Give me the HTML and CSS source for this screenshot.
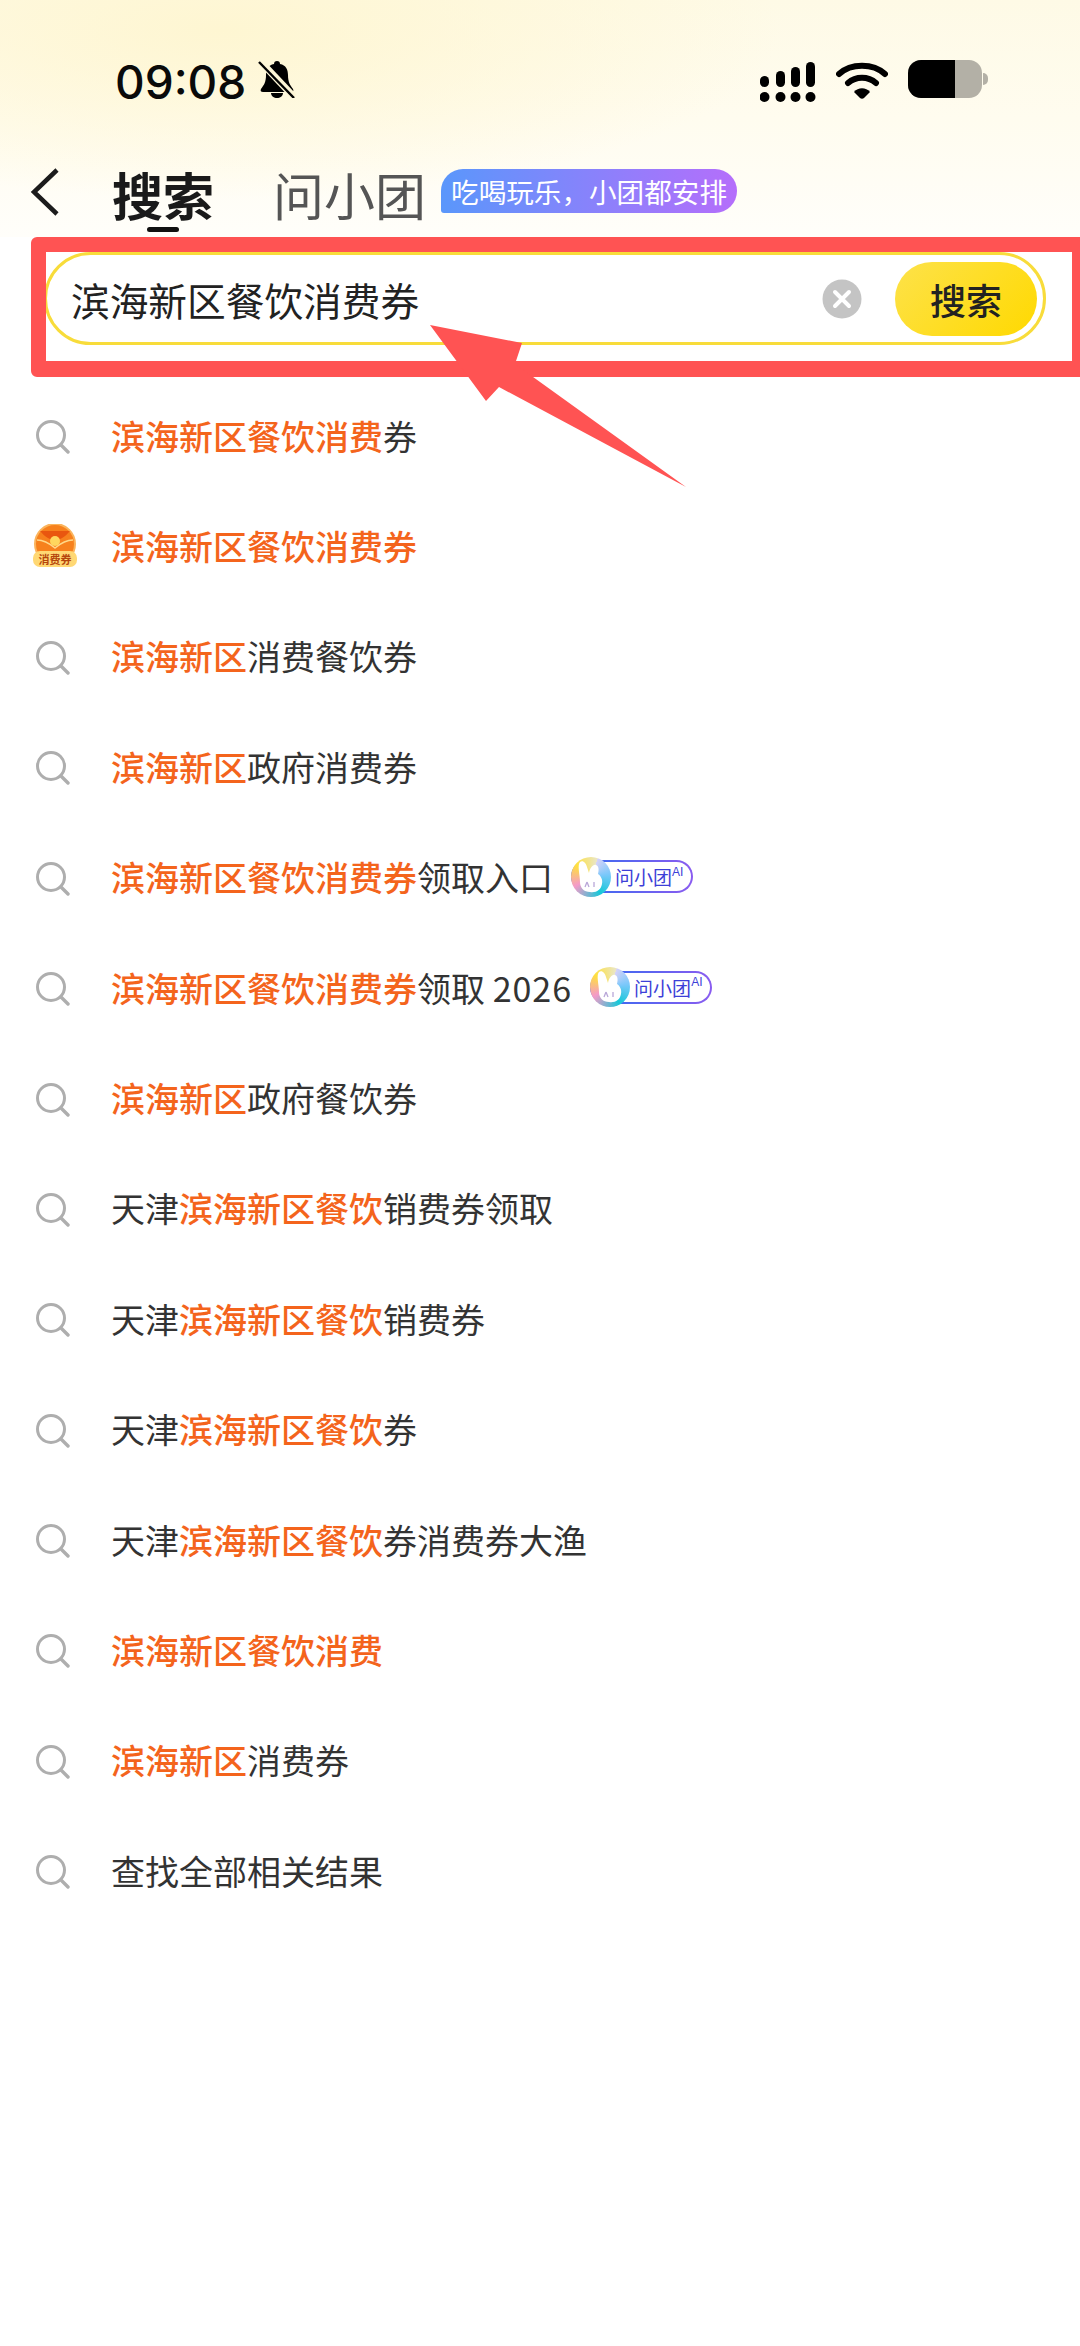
FILE: index.html
```html
<!DOCTYPE html>
<html lang="zh-CN">
<head>
<meta charset="UTF-8">
<meta name="viewport" content="width=device-width, initial-scale=1.0">
<title>搜索</title>
<link rel="stylesheet" href="styles.css">
</head>
<body>
<svg class="defs" width="0" height="0">
    <defs>
        <symbol id="search" viewBox="0 0 34 34">
            <circle cx="15" cy="15" r="13.5" fill="none" stroke="#aeaeae" stroke-width="3"/>
            <path d="M25 25l7 7" fill="none" stroke="#aeaeae" stroke-width="3.4" stroke-linecap="round"/>
        </symbol>
        <symbol id="rabbit" viewBox="0 0 40 40">
            <path d="M9 5c3-2 6 1 7 5l2 6c1-5 4-9 7-8 3 1 3 5 2 9 3 2 5 6 4 10-1 6-6 9-12 8-6 0-10-4-10-10 0-7-3-17 0-20z" fill="#fff"/>
            <path d="M16 25l-2 5M16 25l2 5M23 25v5" fill="none" stroke="#b9a7d8" stroke-width="1.3"/>
        </symbol>
    </defs>
</svg>

<header class="top">
    <div class="status">
        <div class="status-left">
            <span class="time">09:08</span>
            <svg class="bell" width="38" height="38" viewBox="0 0 38 38">
                <path d="M19 1c2 0 3 1 3 3 6 1 8 6 8 11 0 7 2 10 5 14 1 2 0 3-2 3H5c-2 0-3-1-2-3 3-4 5-7 5-14 0-5 2-10 8-11 0-2 1-3 3-3z" fill="#000"/>
                <path d="M13 33h12c0 3-3 5-6 5s-6-2-6-5z" fill="#000"/>
                <path d="M2 1l34 36" stroke="#fdf6d6" stroke-width="7"/>
                <path d="M1 2l35 36" stroke="#000" stroke-width="2.4"/>
            </svg>
        </div>
        <div class="status-right">
            <svg width="56" height="42" viewBox="0 0 56 42">
                <g fill="#000">
                    <rect x="0" y="14" width="9" height="11" rx="4.5"/>
                    <rect x="16" y="9" width="9" height="16" rx="4.5"/>
                    <rect x="31" y="5" width="9" height="20" rx="4.5"/>
                    <rect x="46" y="0" width="9" height="25" rx="4.5"/>
                    <circle cx="4.5" cy="35" r="5"/>
                    <circle cx="20.5" cy="35" r="5"/>
                    <circle cx="35.5" cy="35" r="5"/>
                    <circle cx="50.5" cy="35" r="5"/>
                </g>
            </svg>
            <svg width="52" height="38" viewBox="0 0 52 38">
                <path d="M3 12C15 1 37 1 49 12" fill="none" stroke="#000" stroke-width="6" stroke-linecap="round"/>
                <path d="M12 21c8-7 20-7 28 0" fill="none" stroke="#000" stroke-width="6" stroke-linecap="round"/>
                <path d="M18 30c4-5 12-5 16 0l-6 6c-1 1-3 1-4 0z" fill="#000"/>
            </svg>
            <div class="battery">
                <div class="battery-body"><div class="battery-fill"></div></div>
                <div class="battery-nub"></div>
            </div>
        </div>
    </div>

    <nav class="tabs">
        <svg class="back" width="30" height="48" viewBox="0 0 30 48">
            <path d="M27 2L4 24l23 22" fill="none" stroke="#1c1c1c" stroke-width="4.5"/>
        </svg>
        <div class="tab tab-active">搜索<i class="tab-bar"></i></div>
        <div class="tab">问小团</div>
        <div class="tab-badge">吃喝玩乐，小团都安排</div>
    </nav>
</header>

<div class="frame">
    <div class="searchbox">
        <span class="query">滨海新区餐饮消费券</span>
        <svg class="clear" width="40" height="40" viewBox="0 0 40 40">
            <circle cx="20" cy="20" r="19.5" fill="#c4c4c4"/>
            <path d="M13 13l14 14M27 13L13 27" stroke="#fff" stroke-width="4" stroke-linecap="round"/>
        </svg>
        <div class="search-btn">搜索</div>
    </div>
</div>

<ul class="list">
    <li><span class="slot"><svg class="ico"><use href="#search"/></svg></span><b>滨海新区餐饮消费</b>券</li>
    <li><span class="slot">
        <svg class="coupon" width="46" height="46" viewBox="0 0 46 46">
            <circle cx="23" cy="20" r="20" fill="#f7811d" stroke="#fbb45c" stroke-width="2"/>
            <path d="M8 7c5 6 10 9 15 9s10-3 15-9" fill="#e9560f"/>
            <path d="M5 16c6 0 12 3 18 8 6-5 12-8 18-8" fill="none" stroke="#ffd98a" stroke-width="1.6"/>
            <circle cx="23" cy="17" r="5" fill="#ffd75e"/>
            <rect x="1" y="27" width="44" height="16" rx="7" fill="#ffd874"/>
            <text x="23" y="40" text-anchor="middle" class="coupon-text">消费券</text>
        </svg>
    </span><b>滨海新区餐饮消费券</b></li>
    <li><span class="slot"><svg class="ico"><use href="#search"/></svg></span><b>滨海新区</b>消费餐饮券</li>
    <li><span class="slot"><svg class="ico"><use href="#search"/></svg></span><b>滨海新区</b>政府消费券</li>
    <li><span class="slot"><svg class="ico"><use href="#search"/></svg></span><b>滨海新区餐饮消费券</b><span>领取入口</span><span class="pill"><span class="pill-logo"><svg width="40" height="40"><use href="#rabbit"/></svg></span>问小团<sup>AI</sup></span></li>
    <li><span class="slot"><svg class="ico"><use href="#search"/></svg></span><b>滨海新区餐饮消费券</b><span>领取 <span class="num">2026</span></span><span class="pill"><span class="pill-logo"><svg width="40" height="40"><use href="#rabbit"/></svg></span>问小团<sup>AI</sup></span></li>
    <li><span class="slot"><svg class="ico"><use href="#search"/></svg></span><b>滨海新区</b>政府餐饮券</li>
    <li><span class="slot"><svg class="ico"><use href="#search"/></svg></span>天津<b>滨海新区餐饮</b>销费券领取</li>
    <li><span class="slot"><svg class="ico"><use href="#search"/></svg></span>天津<b>滨海新区餐饮</b>销费券</li>
    <li><span class="slot"><svg class="ico"><use href="#search"/></svg></span>天津<b>滨海新区餐饮</b>券</li>
    <li><span class="slot"><svg class="ico"><use href="#search"/></svg></span>天津<b>滨海新区餐饮</b>券消费券大渔</li>
    <li><span class="slot"><svg class="ico"><use href="#search"/></svg></span><b>滨海新区餐饮消费</b></li>
    <li><span class="slot"><svg class="ico"><use href="#search"/></svg></span><b>滨海新区</b>消费券</li>
    <li><span class="slot"><svg class="ico"><use href="#search"/></svg></span>查找全部相关结果</li>
</ul>

<svg class="arrow" width="1080" height="500" viewBox="0 0 1080 500">
    <polygon points="430,325 522,343 515,364 686,487 499,387 486,401" fill="#ff5353"/>
</svg>
</body>
</html>
```

FILE: styles.css
```css
* {
    box-sizing: border-box;
}
html, body {
    margin: 0;
    padding: 0;
}
body {
    position: relative;
    width: 1080px;
    height: 2346px;
    overflow: hidden;
    background: #fff;
    font-family: "Noto Sans CJK SC", "Noto Sans", sans-serif;
    color: #333;
}
.defs {
    display: block;
    height: 0;
}
.top {
    height: 237px;
    background:
        radial-gradient(ellipse 560px 170px at 220px 30px, #fef6d2 0%, rgba(255, 246, 208, 0) 100%),
        linear-gradient(180deg, #fefae6 0%, #fffcef 50%, #fffefa 100%);
}
.status {
    display: flex;
    justify-content: space-between;
    height: 150px;
    padding: 58px 93px 0 115px;
}
.status-left {
    display: flex;
    align-items: flex-start;
    gap: 12px;
}
.time {
    font-family: Inter, "Liberation Sans", sans-serif;
    font-size: 46px;
    font-weight: 500;
    line-height: 44px;
    color: #0a0a0a;
    margin-top: 2px;
}
.bell {
    margin-top: 2px;
}
.status-right {
    display: flex;
    align-items: flex-start;
    gap: 20px;
    margin-top: 4px;
}
.battery {
    display: flex;
    align-items: center;
    margin-top: -2px;
    margin-right: -1px;
}
.battery-body {
    width: 74px;
    height: 38px;
    border-radius: 13px;
    background: #b3b0a6;
    overflow: hidden;
}
.battery-fill {
    width: 47px;
    height: 100%;
    background: #000;
}
.battery-nub {
    width: 5px;
    height: 12px;
    margin-left: 1px;
    border-radius: 0 6px 6px 0;
    background: #b3b0a6;
}
.tabs {
    display: flex;
    align-items: flex-start;
    height: 87px;
    padding: 18px 0 0 30px;
}
.back {
    margin-right: 52px;
}
.tab {
    display: flex;
    flex-direction: column;
    align-items: center;
    font-size: 51px;
    line-height: 52px;
    color: #555;
    margin-right: 15px;
}
.tab-active {
    margin-right: 59px;
    font-weight: 700;
    color: #1a1a1a;
}
.tab-bar {
    width: 32px;
    height: 5px;
    margin-top: 7px;
    border-radius: 3px;
    background: #111;
}
.tab-badge {
    height: 44px;
    margin-top: 1px;
    padding: 0 10px;
    border-radius: 22px 22px 22px 3px;
    background: linear-gradient(90deg, #5a97fb 0%, #b56efb 100%);
    color: #fff;
    font-size: 27.6px;
    line-height: 44px;
    white-space: nowrap;
}
.frame {
    width: 1049px;
    height: 140px;
    margin-left: 31px;
    border: solid #ff5353;
    border-width: 15px 8px 16px 15px;
    border-radius: 6px 0 0 6px;
    background: #fff;
    overflow: hidden;
}
.searchbox {
    display: flex;
    align-items: center;
    width: 1002px;
    height: 93px;
    margin-left: -2px;
    padding: 0 6px 0 24px;
    border: 3px solid #f8dc3a;
    border-radius: 47px;
    background: #fff;
}
.query {
    flex: 1;
    font-size: 38.7px;
    line-height: 50px;
    color: #222;
}
.clear {
    margin-right: 33px;
}
.search-btn {
    width: 142px;
    height: 74px;
    border-radius: 37px;
    background: linear-gradient(135deg, #fde24a 0%, #ffd900 100%);
    color: #222;
    font-size: 36px;
    font-weight: 500;
    line-height: 74px;
    text-align: center;
}
.list {
    list-style: none;
    margin: 3px 0 0;
    padding: 0 0 0 33px;
}
.list li {
    display: flex;
    align-items: center;
    height: 110.4px;
    font-size: 34px;
}
.list li b {
    font-weight: 500;
    color: #f4641c;
}
.num {
    letter-spacing: 1px;
}
.slot {
    display: flex;
    align-items: center;
    flex: none;
    width: 78px;
}
.ico {
    width: 34px;
    height: 34px;
    margin: 4px 0 0 3px;
}
.coupon {
    margin: 2px 0 0 -1px;
}
.coupon-text {
    font-size: 11px;
    font-weight: 700;
    fill: #b5450c;
}
.pill {
    display: inline-flex;
    align-items: center;
    height: 33px;
    margin-left: 18px;
    padding-right: 8px;
    border: 2px solid transparent;
    border-radius: 17px;
    background:
        linear-gradient(#fff, #fff) padding-box,
        linear-gradient(90deg, #2f6cf0 0%, #8a5cf0 100%) border-box;
    color: #3d3fd8;
    font-size: 19px;
    line-height: 29px;
}
.pill sup {
    font-family: "Liberation Sans", sans-serif;
    font-size: 12px;
    line-height: 12px;
    margin-top: -10px;
    align-self: center;
}
.pill-logo {
    flex: none;
    width: 40px;
    height: 40px;
    margin-left: -2px;
    margin-right: 4px;
    border-radius: 50%;
    background: conic-gradient(from 20deg, #d6d2f8 0deg, #7cc8fb 60deg, #16c8d8 130deg, #f59ac8 220deg, #ffe13c 290deg, #e9e6c8 360deg);
}
.pill-logo svg {
    display: block;
}
.arrow {
    position: absolute;
    left: 0;
    top: 0;
    pointer-events: none;
}
```
